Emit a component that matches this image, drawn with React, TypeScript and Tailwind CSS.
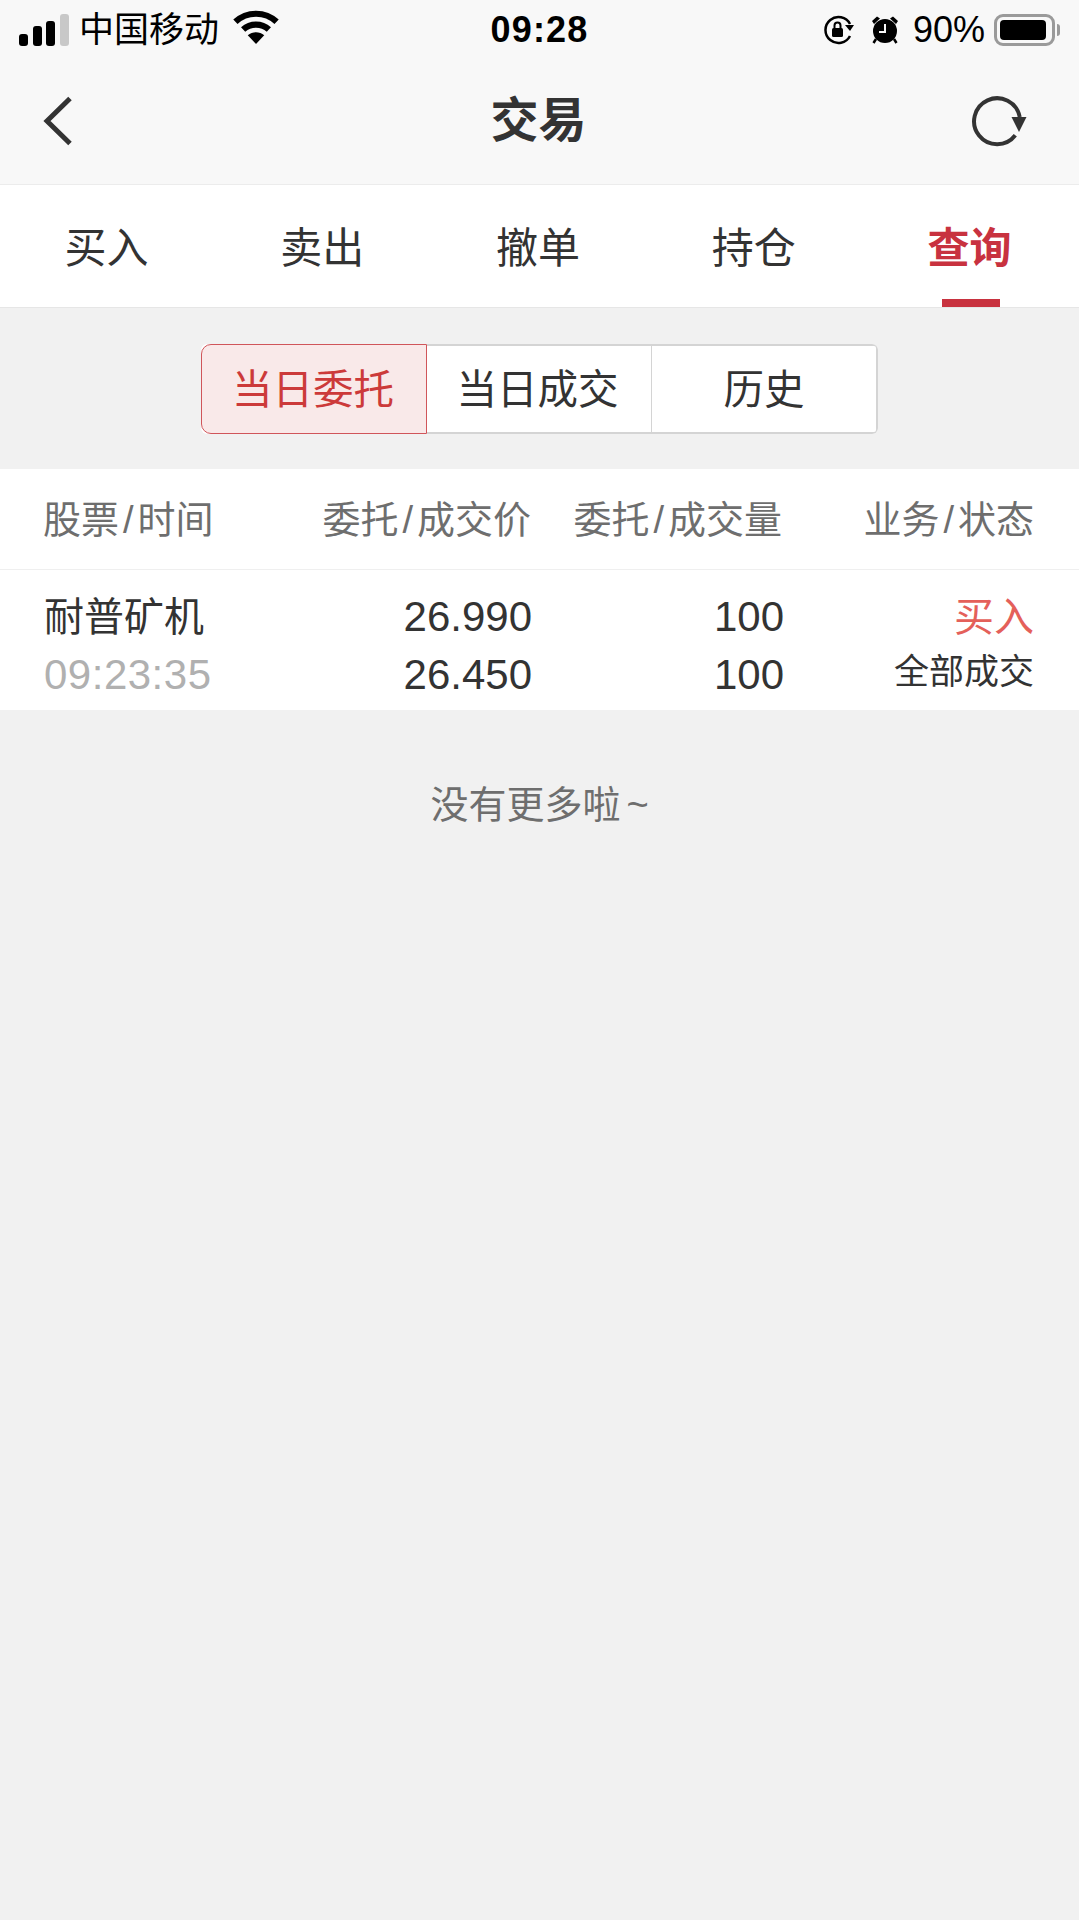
import React from "react";

const FONT = "font-['Liberation_Sans','Noto_Sans_CJK_SC',sans-serif]";

const TABS = ["买入", "卖出", "撤单", "持仓", "查询"];

// header labels have a wider slash than the font gives
const Slash = () => <span className="mx-[4px]">/</span>;

const StatusBar = () => (
  <div className="flex h-[60px] items-center justify-between pl-[19px] pr-[19px] text-black">
    <div className="flex flex-1 items-center">
      <div className="flex items-end gap-[4.500px]">
        <div className="h-[12px] w-[9px] rounded-[3px] bg-black" />
        <div className="h-[20px] w-[9px] rounded-[3px] bg-black" />
        <div className="h-[25px] w-[9px] rounded-[3px] bg-black" />
        <div className="h-[32px] w-[9px] rounded-[3px] bg-[#c8c8c8]" />
      </div>
      <span className="ml-[10.500px] text-[35px] leading-[40px]">中国移动</span>
      <svg className="ml-[14px] mb-[6px]" width="46" height="35" viewBox="0 0 44 34" fill="none">
        <path d="M2 11.500C13 1 31 1 42 11.500" stroke="#000" strokeWidth="6" />
        <path d="M9.500 19C16.500 12.500 27.500 12.500 34.500 19" stroke="#000" strokeWidth="6" />
        <path d="M22 33L14 24.500C18.500 20.500 25.500 20.500 30 24.500Z" fill="#000" />
      </svg>
    </div>
    <span className="text-[36px] font-bold leading-[40px] tracking-[1.200px]">09:28</span>
    <div className="flex flex-1 items-center justify-end">
      <svg width="32" height="30" viewBox="0 0 32 30" fill="none">
        <path d="M27 21A13 13 0 1 1 27 9" stroke="#000" strokeWidth="2.500" />
        <path d="M22 10H31L27 16Z" fill="#000" />
        <rect x="9" y="13" width="11" height="9" rx="1.500" fill="#000" />
        <path d="M11.500 13V10.500A3 3 0 0 1 17.500 10.500V13" stroke="#000" strokeWidth="2" />
      </svg>
      <svg className="ml-[16px]" width="28" height="30" viewBox="0 0 28 30" fill="none">
        <circle cx="14" cy="16" r="12" fill="#000" />
        <path d="M1 6L6 1.500L9 3.500L3 9Z M27 6L22 1.500L19 3.500L25 9Z" fill="#000" />
        <path d="M5 24L2.500 28M23 24L25.500 28" stroke="#000" strokeWidth="2.500" />
        <path d="M14 9V17H8" stroke="#f8f8f8" strokeWidth="2" />
      </svg>
      <span className="ml-[14px] text-[36px] leading-[40px]">90%</span>
      <div className="ml-[9px] flex h-[32px] w-[61px] items-center rounded-[9px] border-[3px] border-[#9a9a9a] p-[3px]">
        <div className="h-full w-[46px] rounded-[4px] bg-black" />
      </div>
      <div className="ml-[2px] h-[12px] w-[3px] rounded-r-full bg-[#9a9a9a]" />
    </div>
  </div>
);

const NavBar = () => (
  <div className="flex h-[125px] items-center border-b border-[#ececec] pb-[3px] pl-[42px] pr-[52px]">
    <div className="flex-1">
      <svg className="block" width="30" height="52" viewBox="0 0 30 52" fill="none">
        <path d="M28 3.500L5 26L28 48.500" stroke="#333" strokeWidth="5" />
      </svg>
    </div>
    <span className="ml-[8px] text-[48px] font-semibold leading-[60px] text-[#333]">交易</span>
    <div className="flex flex-1 justify-end">
      <svg className="block" width="58" height="52" viewBox="0 0 58 52" fill="none">
        <path d="M46.300 40.300A23 23 0 1 1 50.700 22" stroke="#333" strokeWidth="4" />
        <path d="M42.500 22H57.500L50 37Z" fill="#333" />
      </svg>
    </div>
  </div>
);

const Tabs = () => (
  <div className="grid h-[123px] grid-cols-5 border-b border-[#e6e6e6] bg-white">
    {TABS.map((tab, i) => (
      <div key={tab} className="relative flex items-center justify-center">
        <span className={`pr-[3px] pt-[6px] text-[42px] leading-[56px] ${i === 4 ? "font-semibold text-[#c8323f]" : "text-[#333]"}`}>
          {tab}
        </span>
        {i === 4 && <div className="absolute bottom-0 h-[8px] w-[58px] bg-[#c8323f]" />}
      </div>
    ))}
  </div>
);

const Segments = () => (
  <div className="flex h-[161px] items-start justify-center pt-[36px]">
    <div className="flex h-[90px] w-[677px] overflow-hidden rounded-[6px] bg-white text-[40.500px] leading-[54px]">
      <div className="flex w-[226px] items-center justify-center rounded-l-[10px] border border-[#d0555a] bg-[#f9e9e9] pr-[2px] pt-[2px] text-[#cc3a3a]">
        当日委托
      </div>
      <div className="flex w-[225px] items-center justify-center border-y-2 border-r border-[#d4d4d4] pr-[3px] pt-[2px] text-[#333]">
        当日成交
      </div>
      <div className="flex flex-1 items-center justify-center rounded-r-[4px] border-y-2 border-r-2 border-[#d4d4d4] pt-[2px] text-[#333]">
        历史
      </div>
    </div>
  </div>
);

const Table = () => (
  <div className="bg-white">
    <div className="grid h-[101px] grid-cols-[250px_237px_251px_252px] items-center border-b border-[#efefef] pl-[44px] pt-[2px] text-[38px] leading-[50px] text-[#6e6e6e]">
      <span className="-ml-[1px]">股票<Slash />时间</span>
      <span className="text-right">委托<Slash />成交价</span>
      <span className="text-right">委托<Slash />成交量</span>
      <span className="text-right">业务<Slash />状态</span>
    </div>
    <div className="grid h-[140px] grid-cols-[250px_238px_252px_250px] grid-rows-[58px_58px] content-center pl-[44px] pt-[12px] leading-[58px] text-[#333]">
      <span className="text-[40px]">耐普矿机</span>
      <span className="text-right text-[42px]">26.990</span>
      <span className="text-right text-[42px]">100</span>
      <span className="text-right text-[40px] text-[#e4605a]">买入</span>
      <span className="text-[42px] tracking-[0.500px] text-[#b0b0b0]">09:23:35</span>
      <span className="text-right text-[42px]">26.450</span>
      <span className="text-right text-[42px]">100</span>
      <span className="pt-[2px] text-right text-[35px] leading-[48px]">全部成交</span>
    </div>
  </div>
);

export default function App() {
  return (
    <div className={`${FONT} h-[1920px] w-[1079px] overflow-hidden bg-[#f1f1f1]`}>
      <div className="bg-[#f8f8f8]">
        <StatusBar />
        <NavBar />
      </div>
      <Tabs />
      <Segments />
      <Table />
      <div className="pt-[70px] text-center text-[38px] leading-[50px] text-[#6e6e6e]">
        没有更多啦<span className="ml-[6px]">~</span>
      </div>
    </div>
  );
}
